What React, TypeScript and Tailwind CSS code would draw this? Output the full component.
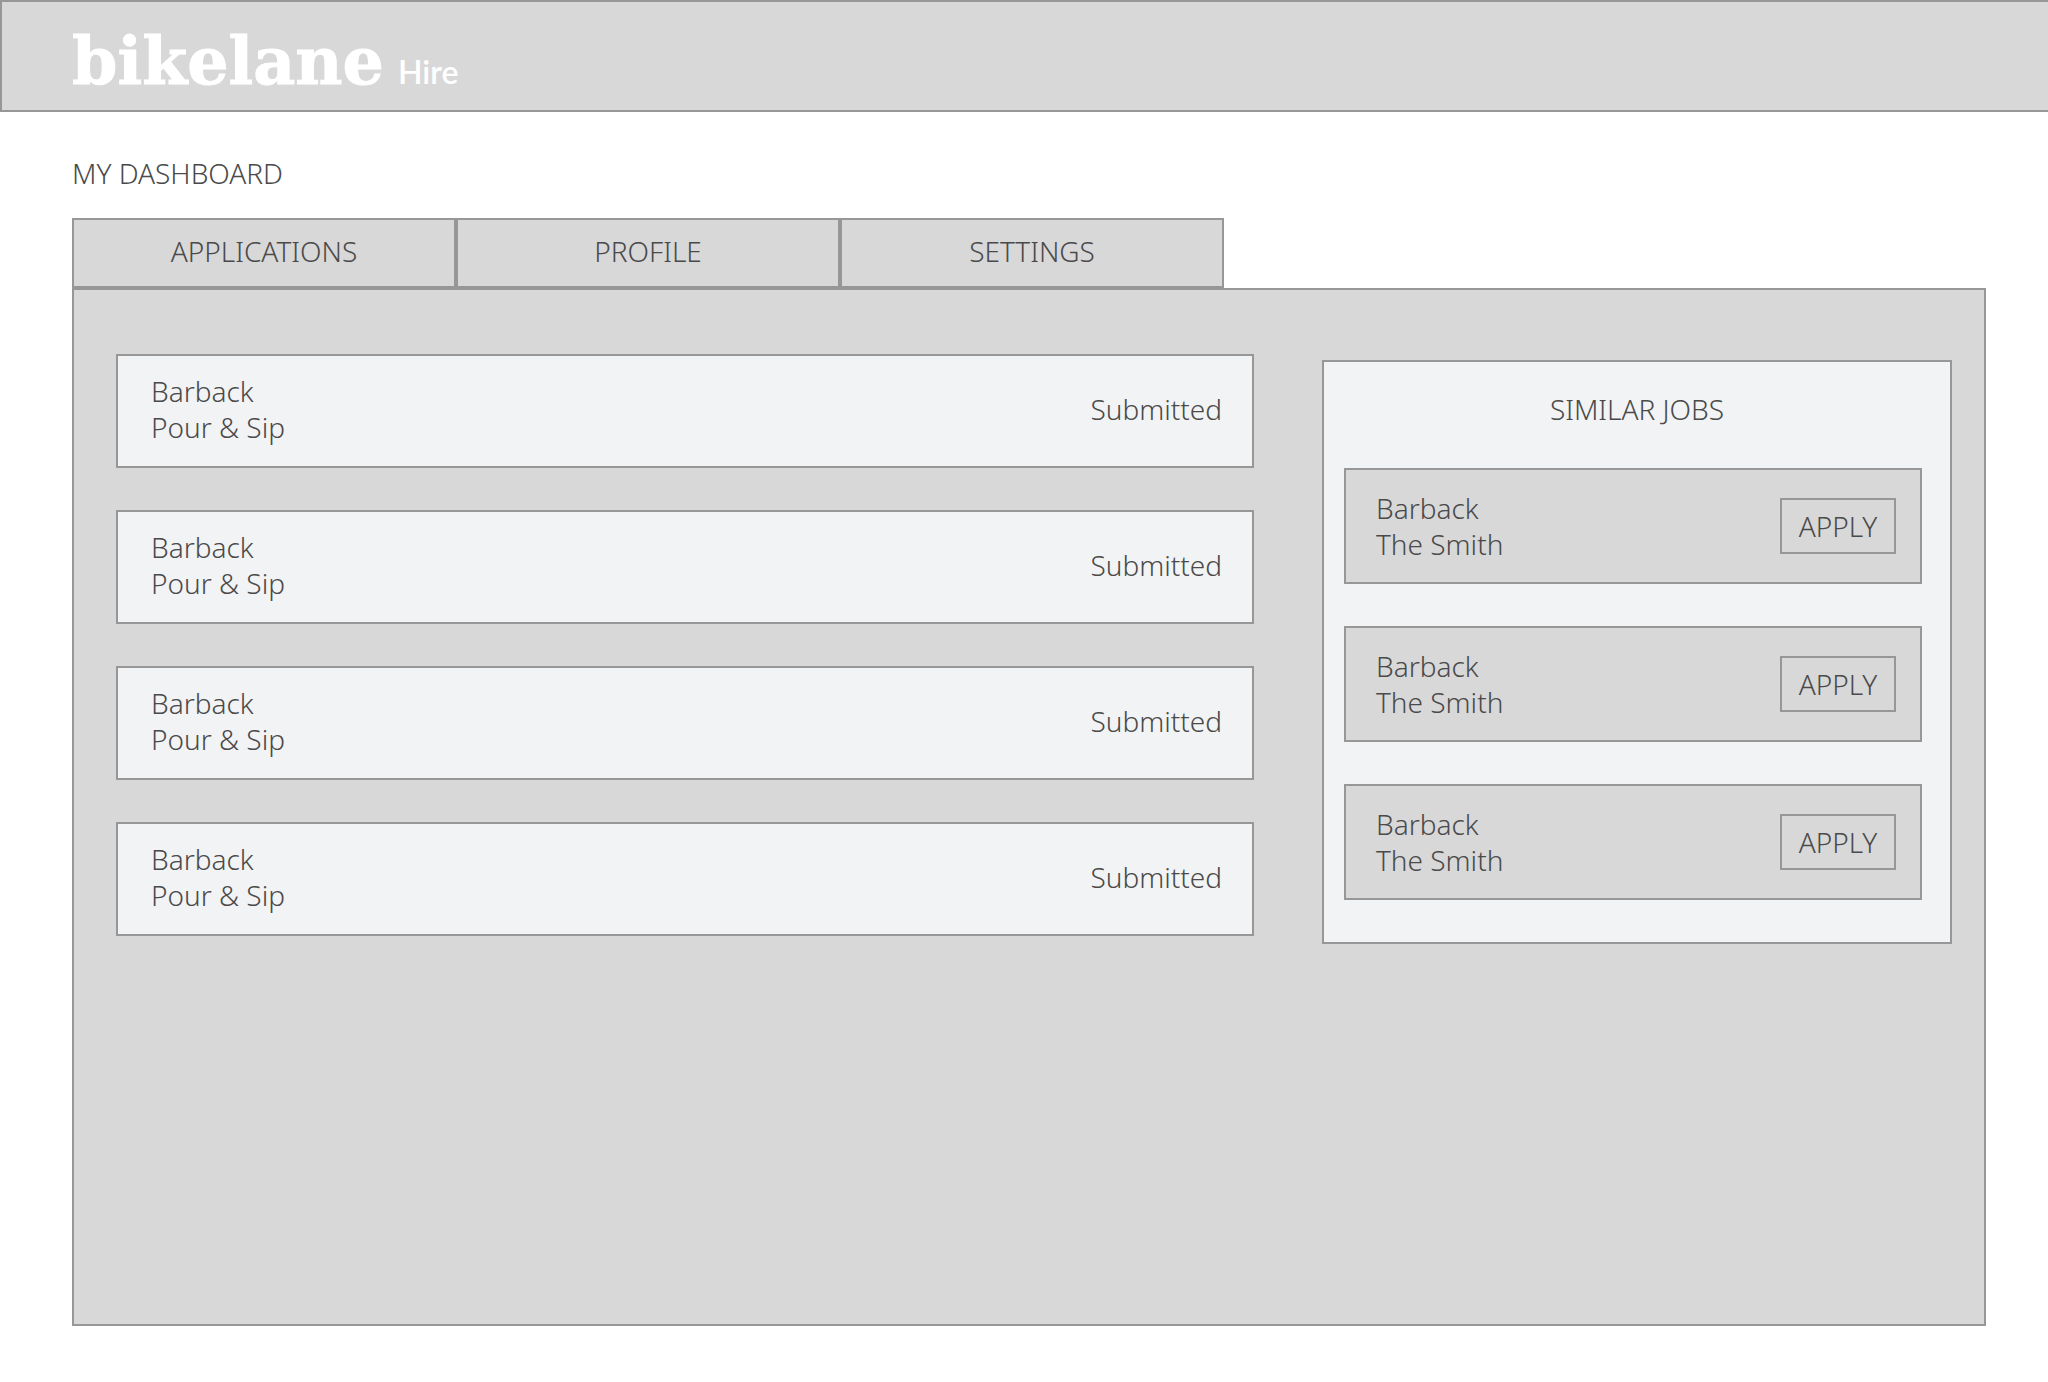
import { useState } from 'react';

const tabs = ['APPLICATIONS', 'PROFILE', 'SETTINGS'];

const applications = [
  { id: 1, title: 'Barback', company: 'Pour & Sip', status: 'Submitted' },
  { id: 2, title: 'Barback', company: 'Pour & Sip', status: 'Submitted' },
  { id: 3, title: 'Barback', company: 'Pour & Sip', status: 'Submitted' },
  { id: 4, title: 'Barback', company: 'Pour & Sip', status: 'Submitted' },
];

const similarJobs = [
  { id: 1, title: 'Barback', company: 'The Smith' },
  { id: 2, title: 'Barback', company: 'The Smith' },
  { id: 3, title: 'Barback', company: 'The Smith' },
];

function Header() {
  return (
    <header className="h-28 border-2 border-r-0 border-[#979797] bg-[#d8d8d8] pl-[70px] pt-2.5 flex items-center">
      <a href="#" className="flex items-baseline gap-3.5 text-white">
        <span className="font-['DejaVu_Serif',serif] font-bold text-[65px] leading-[72px] [-webkit-text-stroke:1px_white]">
          bikelane
        </span>
        <span className="font-['Lato',sans-serif] font-semibold text-[32px]">Hire</span>
      </a>
    </header>
  );
}

export default function App() {
  const [activeTab, setActiveTab] = useState('APPLICATIONS');

  return (
    <div className="min-h-screen flex flex-col bg-white text-[#4a4a4a] font-['Noto_Sans',sans-serif] font-light text-[28px] leading-9">
      <Header />

      <main className="flex-1 flex flex-col pt-[43px] pb-14 pl-[72px] pr-[62px]">
        <h1>MY DASHBOARD</h1>

        <div role="tablist" className="mt-[27px] flex">
          {tabs.map((tab) => (
            <button
              key={tab}
              role="tab"
              aria-selected={activeTab === tab}
              className="w-96 h-[70px] pb-1 border-2 border-[#979797] bg-[#d8d8d8]"
              onClick={() => setActiveTab(tab)}
            >
              {tab}
            </button>
          ))}
        </div>

        <div
          role="tabpanel"
          className="flex-1 grid grid-cols-[1138fr_630fr] gap-[68px] items-start border-2 border-[#979797] bg-[#d8d8d8] pt-16 pb-16 pl-[42px] pr-8"
        >
          <ul className="flex flex-col gap-[42px]">
            {applications.map((app) => (
              <li
                key={app.id}
                className="h-[114px] flex items-center justify-between border-2 border-[#979797] bg-[#f2f3f5] pl-[33px] pr-[30px] pb-1"
              >
                <div>
                  <p>{app.title}</p>
                  <p>{app.company}</p>
                </div>
                <span>{app.status}</span>
              </li>
            ))}
          </ul>

          <aside className="mt-1.5 border-2 border-[#979797] bg-[#f2f3f5] pt-[29px] pb-[42px]">
            <h2 className="text-center">SIMILAR JOBS</h2>
            <ul className="mt-[41px] pl-5 pr-7 flex flex-col gap-[42px]">
              {similarJobs.map((job) => (
                <li
                  key={job.id}
                  className="h-[116px] flex items-center justify-between border-2 border-[#979797] bg-[#d8d8d8] pl-[30px] pr-6"
                >
                  <div>
                    <p>{job.title}</p>
                    <p>{job.company}</p>
                  </div>
                  <button className="w-[116px] h-14 border-2 border-[#979797]">APPLY</button>
                </li>
              ))}
            </ul>
          </aside>
        </div>
      </main>
    </div>
  );
}
